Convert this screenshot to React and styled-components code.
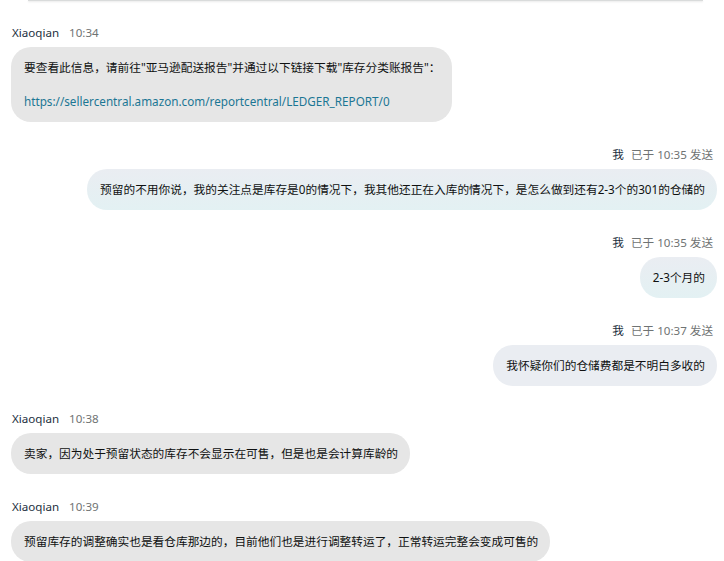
import React from "react";
import styled, { createGlobalStyle } from "styled-components";

const GlobalStyle = createGlobalStyle`
  html, body { margin: 0; padding: 0; background: #ffffff; }
  body {
    font-family: "Noto Sans", "Noto Sans CJK SC", sans-serif;
    color: #0f1111;
    -webkit-font-smoothing: antialiased;
  }
`;

const TopEdge = styled.div`
  height: 1px;
  margin: 0 21px 0 28px;
  background: #d9dbdb;
  box-shadow: 0 1px 2px rgba(0, 0, 0, 0.12);
`;

const Thread = styled.div`
  display: flex;
  flex-direction: column;
  padding: 24px 7px 0 11px;
`;

const Group = styled.div`
  display: flex;
  flex-direction: column;
  align-items: ${(p) => (p.$mine ? "flex-end" : "flex-start")};
  & + & { margin-top: 25px; }
`;

const Meta = styled.div`
  display: flex;
  gap: ${(p) => (p.$mine ? "7px" : "10px")};
  font-size: 11.6px;
  line-height: 16px;
  padding: ${(p) => (p.$mine ? "0 4px 0 0" : "0 0 0 1px")};
  margin-bottom: 6px;
`;

const Name = styled.span`
  color: #232f3e;
`;

const Time = styled.span`
  color: #6f7373;
`;

const Bubble = styled.div`
  font-size: 11.7px;
  line-height: 17px;
  padding: 12px 12px 12px 13px;
  border-radius: 20px;
  white-space: pre-wrap;
  color: #0f1111;
  background: ${(p) =>
    p.$tone === "sent"
      ? "linear-gradient(180deg, #eaedf2 0%, #e3f1f3 100%)"
      : p.$tone === "sentGray"
      ? "#eaedf2"
      : "#e6e6e6"};
`;

const Link = styled.a`
  color: #1b7694;
  text-decoration: none;
`;

const messages = [
  {
    mine: false,
    name: "Xiaoqian",
    time: "10:34",
    content: (
      <>
        {"要查看此信息，请前往\"亚马逊配送报告\"并通过以下链接下载\"库存分类账报告\"：\n\n"}
        <Link href="#">https://sellercentral.amazon.com/reportcentral/LEDGER_REPORT/0</Link>
      </>
    ),
  },
  {
    mine: true,
    tone: "sent",
    time: "已于 10:35 发送",
    content:
      "预留的不用你说，我的关注点是库存是0的情况下，我其他还正在入库的情况下，是怎么做到还有2-3个的301的仓储的",
  },
  { mine: true, tone: "sent", time: "已于 10:35 发送", content: "2-3个月的" },
  {
    mine: true,
    tone: "sentGray",
    time: "已于 10:37 发送",
    content: "我怀疑你们的仓储费都是不明白多收的",
  },
  {
    mine: false,
    name: "Xiaoqian",
    time: "10:38",
    content: "卖家，因为处于预留状态的库存不会显示在可售，但是也是会计算库龄的",
  },
  {
    mine: false,
    name: "Xiaoqian",
    time: "10:39",
    content:
      "预留库存的调整确实也是看仓库那边的，目前他们也是进行调整转运了，正常转运完整会变成可售的",
  },
];

export default function App() {
  return (
    <>
      <GlobalStyle />
      <TopEdge />
      <Thread>
        {messages.map((m, i) => (
          <Group key={i} $mine={m.mine}>
            <Meta $mine={m.mine}>
              <Name>{m.mine ? "我" : m.name}</Name>
              <Time>{m.time}</Time>
            </Meta>
            <Bubble $tone={m.mine ? m.tone : "received"}>{m.content}</Bubble>
          </Group>
        ))}
      </Thread>
    </>
  );
}
